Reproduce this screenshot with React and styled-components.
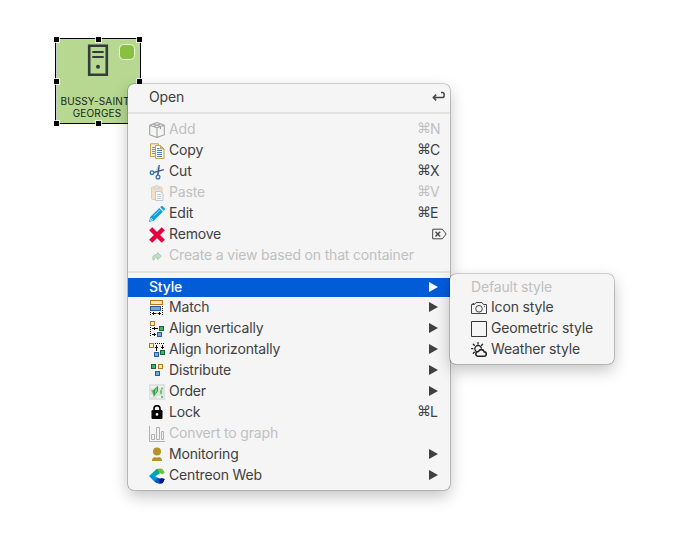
import React from 'react';
import styled, { createGlobalStyle, css } from 'styled-components';

const GlobalStyle = createGlobalStyle`
  * { box-sizing: border-box; }
  body { margin: 0; background: #fff; overflow: hidden; font-family: Inter, "Liberation Sans", sans-serif; }
`;

const Canvas = styled.main`
  position: relative;
  width: 685px;
  height: 546px;
  background: #fff;
  overflow: hidden;
`;

const Node = styled.div`
  position: absolute;
  left: 55px;
  top: 38px;
  width: 86px;
  height: 86px;
  border: 1px solid #000;
  background: #b6d890;
  box-shadow: inset 1px 1px 0 #c3d3cb;
`;

const NodeGlyph = styled.svg`
  position: absolute;
  left: 31px;
  top: 5px;
`;

const NodeStatus = styled.span`
  position: absolute;
  left: 63px;
  top: 5px;
  width: 16px;
  height: 16px;
  border: 1px solid #f2f9e8;
  border-radius: 4.5px;
  background: #88c03f;
`;

const NodeName = styled.div`
  position: absolute;
  left: -2px;
  top: 56px;
  width: 86px;
  color: #1d2421;
  font-size: 10px;
  line-height: 12px;
  letter-spacing: 0.15px;
  text-align: center;
  white-space: nowrap;
`;

const Handle = styled.i`
  position: absolute;
  left: ${(p) => p.$x}px;
  top: ${(p) => p.$y}px;
  width: 5px;
  height: 5px;
  background: #000;
  box-shadow: 0 0 0 1px rgba(255, 255, 255, 0.75);
`;

const Menu = styled.ul`
  position: absolute;
  left: ${(p) => p.$x}px;
  top: ${(p) => p.$y}px;
  width: ${(p) => p.$width}px;
  margin: 0;
  padding: ${(p) => p.$padTop}px 0 4px;
  list-style: none;
  background: #f5f5f5;
  border-radius: 6px;
  box-shadow: 0 0 0 0.6px rgba(0, 0, 0, 0.32), 0 6px 16px rgba(0, 0, 0, 0.24);
`;

const Row = styled.li`
  display: flex;
  align-items: center;
  height: ${(p) => (p.$short ? 19 : 21)}px;
  padding: 0 3px 0 21px;
  color: ${(p) => (p.$disabled ? '#c0c0c0' : '#404040')};
  font-size: 14px;
  line-height: 19px;
  white-space: nowrap;
  ${(p) => p.$active && css`
    color: #fff;
    font-weight: 500;
    background: #025cd8;
  `}
`;

const IconSlot = styled.span`
  display: flex;
  flex: none;
  width: 16px;
  height: 16px;
  margin: 1px 4px 0 0;
  opacity: ${(p) => (p.$faded ? 0.5 : 1)};
`;

const Label = styled.span`
  flex: 1;
  padding-bottom: 2px;
  letter-spacing: -0.17px;
`;

const Shortcut = styled.span`
  display: flex;
  flex: none;
  align-items: center;
  width: 30px;
  padding-bottom: 2px;
`;

const Command = styled.span`
  width: 13px;
  font-family: "DejaVu Sans", sans-serif;
  font-size: 14px;
`;

const KeyGlyph = styled.svg`
  flex: none;
  margin-left: 15px;
`;

const Arrow = styled.svg`
  flex: none;
  margin: 0 9px 1px 0;
`;

const Separator = styled.li`
  height: ${(p) => p.$height}px;
  padding-top: ${(p) => p.$offset}px;
  &::after {
    content: '';
    display: block;
    height: 2px;
    background: #e3e3e3;
  }
`;

const Svg = ({ children, ...rest }) => (
  <svg width="16" height="16" viewBox="0 0 16 16" fill="none" {...rest}>{children}</svg>
);

const Tile = ({ x, y, color = 'blue' }) => {
  const tones = {
    blue: ['#285a9c', '#73a9df'],
    green: ['#17643d', '#3ab666'],
    gold: ['#b97718', '#fff0b8'],
  };
  const [edge, fill] = tones[color];
  return <rect x={x + 0.5} y={y + 0.5} width="4" height="4" fill={fill} stroke={edge} />;
};

const icons = {
  box: (
    <Svg stroke="#555" strokeWidth="1.1" strokeLinejoin="round">
      <path d="M.7 3.2 8 .6l7.3 2.6v9.6L8 15.5.7 12.8ZM.7 3.2 8 5.7l7.3-2.5M8 5.7v9.8M4 1.9l7.5 2.6v2.7M11.6 1.9 4.3 4.5" />
    </Svg>
  ),
  copy: (
    <Svg>
      <path d="M1.5.8h8v12.7h-8Z" fill="#f3efdd" stroke="#c5a34e" />
      <path d="M3 4.5h3M3 6.5h3M3 8.5h3M3 10.5h3" stroke="#6d93c2" />
      <path d="M6.5 2.5h5l3.5 3.5v9.5H6.5Z" fill="#fcfbf4" stroke="#c0a052" />
      <path d="M11.5 2.5V6H15Z" fill="#d9bd6c" stroke="#b99546" strokeWidth=".7" />
      <path d="M8 5.5h2.5M8 7.5h5M8 9.5h5M8 11.5h5M8 13.5h5" stroke="#4e80bd" />
    </Svg>
  ),
  cut: (
    <Svg>
      <path d="M10.2 1 8.8 11.2M14.8 5.6 4.5 8.6" stroke="#38588a" strokeWidth="1.5" />
      <path d="m9.7 1.5-2.4 5" stroke="#a4b6ca" strokeWidth=".8" />
      <circle cx="3" cy="8.7" r="1.8" fill="#d9eef8" stroke="#2e78b4" strokeWidth="1.3" />
      <circle cx="9" cy="13" r="1.9" fill="#d9eef8" stroke="#2e78b4" strokeWidth="1.3" />
    </Svg>
  ),
  paste: (
    <Svg>
      <rect x="2.5" y="2" width="10.5" height="12.5" rx="1" fill="#efcf99" stroke="#d9a85f" />
      <path d="M5 3.8V1.8h1.3L6.8.6h1.5l.5 1.2H10v2Z" fill="#ddd" stroke="#9b9ba4" strokeWidth=".7" />
      <path d="M6.5 6.5h5l2.5 2.3v6.7H6.5Z" fill="#fff" stroke="#8c9abc" />
      <path d="M8.2 9.5h3.5M8.2 11.5h4M8.2 13.5h4" stroke="#7c99c5" />
    </Svg>
  ),
  edit: (
    <Svg>
      <path d="M0 16 1.2 11 10.3 2.1l3.6 3.6L4.8 14.7ZM11.2 1.2 12.1.3c.6-.4 1.2-.4 1.8.1l1.7 1.7c.5.6.5 1.2 0 1.8l-.9.9Z" fill="#12a0dc" />
      <path d="m5 9.8 5.7-5.7M1.3 14.7l.7-2.6 1.9 1.9Z" stroke="#c3eafa" strokeWidth=".8" />
    </Svg>
  ),
  remove: (
    <Svg><path d="m1.7 1.7 12.6 12.6M14.3 1.7 1.7 14.3" stroke="#e6003e" strokeWidth="4.4" /></Svg>
  ),
  create: (
    <Svg>
      <path d="M4 12C2.8 8.3 4.8 6.3 8.5 6.4V4.5l4 3.6-4 3.6V9.6C6 9.4 4.9 10.2 5.2 12Z" fill="#91c99b" stroke="#4b9c61" strokeWidth=".8" />
    </Svg>
  ),
  match: (
    <Svg shapeRendering="crispEdges">
      <rect x="1.5" y=".5" width="12" height="4" fill="#ffe9a8" stroke="#bd751b" />
      <rect x="1.5" y="6.5" width="10" height="4" fill="#75a5dd" stroke="#31579b" />
      <path d="M1.5 12v4M13.5 6v10" stroke="#000" strokeDasharray="1 1" />
      <path d="M3 13.5h9M4.5 12v3M10.5 12v3" stroke="#000" />
      <path d="M7 13.5h2" stroke="#df8b28" />
    </Svg>
  ),
  alignV: (
    <Svg shapeRendering="crispEdges">
      <path d="M1.5 6v10" stroke="#000" strokeDasharray="1 1" />
      <Tile x={1} y={0} color="gold" /><Tile x={10} y={5} color="green" /><Tile x={8} y={11} />
      <path d="M3 7.5h6M5.5 6v3M3 13.5h4M5.5 12v3" stroke="#000" />
    </Svg>
  ),
  alignH: (
    <Svg shapeRendering="crispEdges">
      <path d="M6 1.5h9" stroke="#000" strokeDasharray="1 1" />
      <Tile x={0} y={1} color="gold" /><Tile x={5} y={10} /><Tile x={11} y={8} color="green" />
      <path d="M7.5 3v6M6 5.5h3M13.5 3v4M12 5.5h3" stroke="#000" />
    </Svg>
  ),
  distribute: (
    <Svg shapeRendering="crispEdges">
      <Tile x={2} y={1} color="green" /><Tile x={9} y={1} color="gold" /><Tile x={6} y={8} />
    </Svg>
  ),
  order: (
    <Svg>
      <path fill="#dfe2df" d="M0 0h16v16H0z" />
      <path d="M2 3h4M10 3h4M1 12h3M8 13h6" stroke="#f3f3f3" strokeWidth="2" />
      <path d="m2 6 2.4 5 1-4.8Z" fill="#6db877" />
      <path d="m4.5 6 4.5-4v5l-4.5 6Z" fill="#29a33c" />
      <path d="m6 6 2-2v3l-2 3Z" fill="#75dc77" />
      <path d="M12 3.5h2v2h-2zM11 6h2v4h-2zM12 12h2v2h-2z" fill="#73c47c" />
    </Svg>
  ),
  lock: (
    <Svg>
      <rect x="2.5" y="5" width="11" height="9" rx="1.2" fill="#000" />
      <path d="M5 5.5V3.7a3 3 0 0 1 6 0v1.8" stroke="#000" strokeWidth="1.6" />
      <circle cx="8" cy="9.4" r="1.3" fill="#f5f5f5" />
    </Svg>
  ),
  graph: (
    <Svg stroke="#6e6e6e">
      <path d="M.5 0v15.5H16M2.5 8.5h3v5h-3ZM7.5 1.5h3v12h-3ZM12.5 5.5h2v8h-2Z" />
    </Svg>
  ),
  person: (
    <Svg fill="#b39325"><circle cx="8" cy="4.5" r="4" /><path d="M2.8 14c.3-3 2.2-4 3-4 1.5.8 2.9.8 4.4 0 .8 0 2.7 1 3 4Z" /></Svg>
  ),
  centreon: (
    <Svg>
      <path d="m0 8 5.5-5.1 4 3.5L6.2 8Z" fill="#00a3cf" />
      <path d="M5.5 2.9C8 0 11.5 0 14 1.5L15.7 5 13 6.2C11 4.7 9.6 5.4 8.2 7Z" fill="#72be32" />
      <path d="M5.5 2.9 8.3.7 10.6 5.2 8.2 7 5.7 8Z" fill="#00a994" />
      <path d="M0 8h6.2l3 2.5-3.7 3.3Z" fill="#0093dd" />
      <path d="m5.5 13.6 3.2-4c1.2 1.2 2.4 1.5 3.8.6L15.7 11l-1.8 4c-3 1.4-6 .8-8.4-1.4Z" fill="#0853bc" />
      <path d="m10.3 10.7 2.7-.5 2.7.8-1.8 4-3.2.5Z" fill="#00129a" />
    </Svg>
  ),
  camera: (
    <Svg stroke="#444" strokeWidth="1">
      <path d="M.5 4.5h3l1.5-2h6l1.5 2h3v9H.5ZM1.5 3.5h1.7" /><circle cx="8" cy="8.8" r="3.3" /><path d="M13 6.3h1" />
    </Svg>
  ),
  square: <Svg stroke="#353535"><path d="M.5.5h15v15H.5Z" /></Svg>,
  weather: (
    <Svg stroke="#222" strokeWidth="1.3" strokeLinecap="round">
      <path d="M5.2 9.5A3.3 3.3 0 1 1 10.3 6M7 .6v1.3M2.3 2.3l1 1M.6 6.7h1.2M2.3 11.3l1-1M11.6 2.3l-.9.9" />
      <path d="M7 14.3h6a2.2 2.2 0 0 0 .2-4.4A3 3 0 0 0 7.5 9.5 2.4 2.4 0 0 0 7 14.3Z" strokeWidth="1.6" />
    </Svg>
  ),
};

const ReturnKey = () => (
  <KeyGlyph width="13" height="12" viewBox="0 0 13 12" fill="none" stroke="#444" strokeWidth="1.5">
    <path d="M9 1.5h1.3a1.8 1.8 0 0 1 1.8 1.8v1.4a1.8 1.8 0 0 1-1.8 1.8H1.5M4.2 3.6 1.3 6.5l2.9 2.9" />
  </KeyGlyph>
);

const DeleteKey = () => (
  <KeyGlyph width="15" height="12" viewBox="0 0 15 12" fill="none" stroke="#444">
    <path d="M.7 1.2h9.6l3.9 4.8-3.9 4.8H.7Z" />
    <path d="m3.5 3.7 4.7 4.7M8.2 3.7 3.5 8.4" strokeWidth="1.4" />
  </KeyGlyph>
);

const mainItems = [
  { label: 'Open', glyph: <ReturnKey /> },
  { separator: true, height: 11, offset: 4 },
  { label: 'Add', icon: 'box', keyName: 'N', disabled: true },
  { label: 'Copy', icon: 'copy', keyName: 'C' },
  { label: 'Cut', icon: 'cut', keyName: 'X' },
  { label: 'Paste', icon: 'paste', keyName: 'V', disabled: true },
  { label: 'Edit', icon: 'edit', keyName: 'E' },
  { label: 'Remove', icon: 'remove', glyph: <DeleteKey /> },
  { label: 'Create a view based on that container', icon: 'create', disabled: true },
  { separator: true, height: 12, offset: 5 },
  { label: 'Style', submenu: true, active: true, short: true },
  { label: 'Match', icon: 'match', submenu: true },
  { label: 'Align vertically', icon: 'alignV', submenu: true },
  { label: 'Align horizontally', icon: 'alignH', submenu: true },
  { label: 'Distribute', icon: 'distribute', submenu: true },
  { label: 'Order', icon: 'order', submenu: true },
  { label: 'Lock', icon: 'lock', keyName: 'L' },
  { label: 'Convert to graph', icon: 'graph', disabled: true },
  { label: 'Monitoring', icon: 'person', submenu: true },
  { label: 'Centreon Web', icon: 'centreon', submenu: true },
];

const styleItems = [
  { label: 'Default style', disabled: true, short: true },
  { label: 'Icon style', icon: 'camera' },
  { label: 'Geometric style', icon: 'square' },
  { label: 'Weather style', icon: 'weather' },
];

const MenuItem = ({ item }) => {
  if (item.separator) return <Separator $height={item.height} $offset={item.offset} />;
  return (
    <Row $disabled={item.disabled} $active={item.active} $short={item.short}>
      {item.icon && <IconSlot $faded={item.disabled}>{icons[item.icon]}</IconSlot>}
      <Label>{item.label}</Label>
      {item.keyName && <Shortcut><Command>⌘</Command>{item.keyName}</Shortcut>}
      {item.glyph && <Shortcut>{item.glyph}</Shortcut>}
      {item.submenu && (
        <Arrow width="9" height="10" viewBox="0 0 9 10" fill="currentColor"><path d="M0 0 9 5 0 10Z" /></Arrow>
      )}
    </Row>
  );
};

const handles = [[-2, -2], [40, -2], [81, -2], [-2, 40], [81, 40], [-2, 82], [40, 82], [81, 82]];

export default function App() {
  return (
    <>
      <GlobalStyle />
      <Canvas>
        <Node>
          <NodeGlyph width="22" height="33" viewBox="0 0 22 33" fill="none" stroke="#343b3c">
            <path d="M2.2 1.7h17.6v29H2.2Z" strokeWidth="2.6" />
            <path d="M5.3 8h11.4M5.3 13h11.4" strokeWidth="2" />
            <circle cx="11" cy="22.8" r="2" fill="#343b3c" stroke="none" />
          </NodeGlyph>
          <NodeStatus />
          <NodeName>BUSSY-SAINT-<br />GEORGES</NodeName>
          {handles.map(([x, y]) => <Handle key={`${x}:${y}`} $x={x} $y={y} />)}
        </Node>
        <Menu $x={128} $y={84} $width={322} $padTop={3}>
          {mainItems.map((item, i) => <MenuItem key={i} item={item} />)}
        </Menu>
        <Menu $x={450} $y={274} $width={164} $padTop={4}>
          {styleItems.map((item) => <MenuItem key={item.label} item={item} />)}
        </Menu>
      </Canvas>
    </>
  );
}
